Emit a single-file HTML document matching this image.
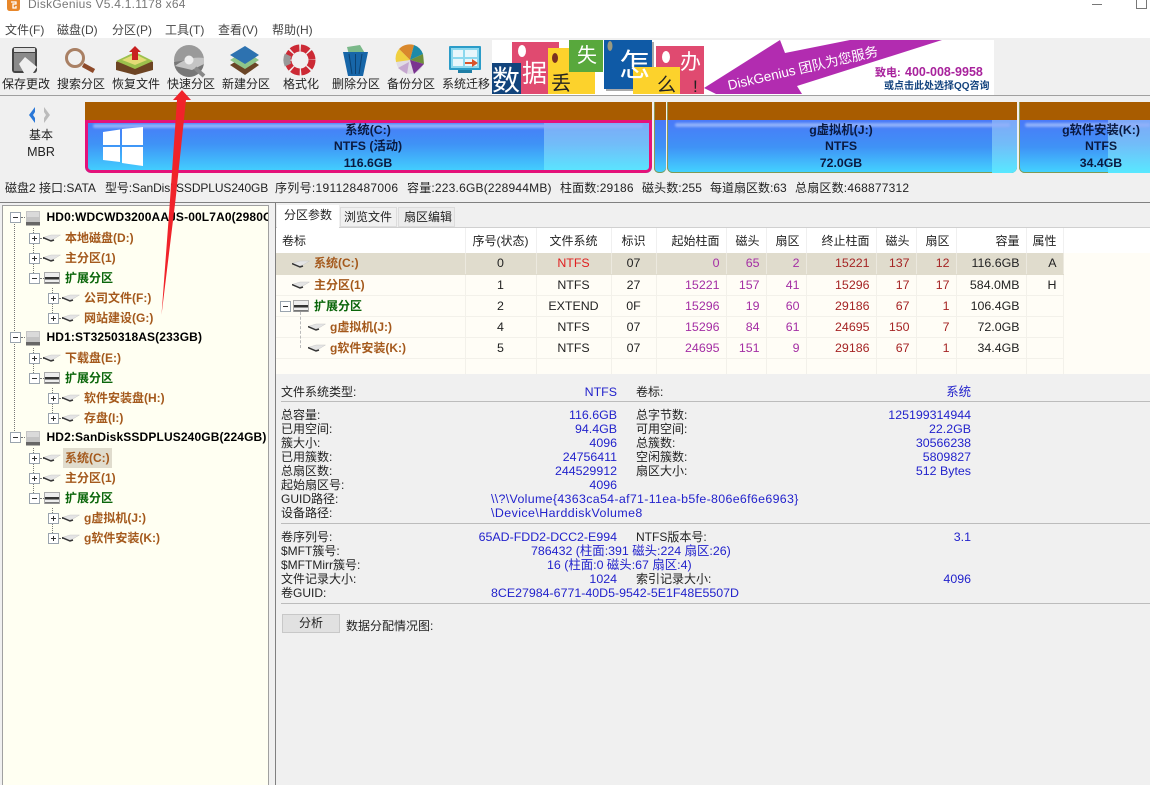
<!DOCTYPE html>
<html lang="zh"><head><meta charset="utf-8"><title>DiskGenius</title>
<style>
html,body{margin:0;padding:0;width:1150px;height:785px;overflow:hidden}
body{position:relative;background:#f0f0f0;font:12px/14px "Liberation Sans","Noto Sans CJK SC",sans-serif;color:#222}
#w{position:absolute;left:0;top:0;width:1150px;height:785px;overflow:hidden;background:#f0f0f0}
.t{position:absolute;white-space:nowrap;line-height:14px}
.a{position:absolute}
.m{color:#444}
.c{transform:translateX(-50%)}
.lb{font-size:12px;color:#222}
.v{color:#2222cc;font-size:12.4px}
.h{font-weight:bold;color:#000;letter-spacing:.13px}
.br{font-weight:bold;color:#a4591c}
.gr{font-weight:bold;color:#0b660b}
.pb{font-weight:bold;color:#0a1a40;font-size:12.3px}
.b{position:absolute;width:9px;height:9px;border:1px solid #9aa4ae;background:#fff;box-sizing:content-box}
.b:before{content:"";position:absolute;left:2px;top:4px;width:5px;height:1px;background:#333}
.p:after{content:"";position:absolute;left:4px;top:2px;width:1px;height:5px;background:#333}
.dv{position:absolute;border-left:1px dotted #777;width:0}
.dh{position:absolute;border-top:1px dotted #777;height:0}
svg.ic{position:absolute;overflow:visible}
table{position:absolute;left:276px;top:228px;border-collapse:collapse;table-layout:fixed;width:787px;font-size:12.4px}
td{height:21px;padding:0 6px;border-right:1px solid #f3f1ea;border-bottom:1px solid #f3f1ea;white-space:nowrap;box-sizing:border-box;background:#fffdf6;text-align:right;overflow:hidden}
tr.hd td{height:25px;background:#fff;color:#222;font-size:12px;border-right:1px solid #f0f0f0;border-bottom:0}
tr.sel td{background:#e0dccd;border-right-color:#ece9df;border-bottom-color:#e0dccd}
tr.bl td{height:16px;border-bottom:0}
td.l{text-align:left}td.ce{text-align:center;padding:0}
.pu{color:#a42ea4}.re{color:#a52424}
hr{position:absolute;margin:0;border:0;height:1px;background:#bcbcbc;left:281px;width:869px}
.pt{position:absolute;overflow:hidden;background:linear-gradient(#a85c00 18px,#4a79f8 18px,#3f92f6 45px,#43d4ff);box-shadow:inset 0 -1px 0 #7f9a55,inset 1px 0 0 #8f9a55}
.li{position:absolute;top:18px;height:53px;background:linear-gradient(#7ea8f8,#72bcf8 45%,#58e8ff)}
.gl{position:absolute;top:21px;height:4px;background:#8fb0fa;border-radius:3px;filter:blur(1px)}
</style></head><body><div id="w">
<svg width="0" height="0" style="position:absolute"><defs>
<symbol id="pt" viewBox="0 0 18 10"><path d="M0 4.500L8 2H17.500L10 6.500L7 7Z" fill="#e4e4e4" stroke="#c8c8c8" stroke-width=".5"/><path d="M0 4.500L8 8L11 7" fill="none" stroke="#333" stroke-width="1.500"/></symbol>
<symbol id="hd" viewBox="0 0 14 15"><rect x="0" y="0" width="14" height="11" fill="#c4c4c4"/><rect x="1" y="1" width="12" height="5" fill="#dadada"/><rect x="0" y="11" width="14" height="3.500" fill="#666"/></symbol>
<symbol id="ex" viewBox="0 0 16 12"><rect x=".5" y=".5" width="15" height="11" fill="#eee" stroke="#aaa"/><rect x="1" y="5" width="14" height="2.500" fill="#333"/><rect x="1" y="10" width="14" height="1.500" fill="#777"/></symbol>
</defs></svg>

<!-- title bar -->
<div class="a" style="left:0;top:0;width:1150px;height:38px;background:#fff"></div>
<svg class="ic" style="left:7px;top:0" width="14" height="12"><path d="M0 0H13V8Q13 11 10 11H3Q0 11 0 8Z" fill="#e8872a"/><path d="M4 2H9V4H6V8H9V6" fill="none" stroke="#fff" stroke-width="1.300"/></svg>
<span class="t" style="left:28px;top:-3px;color:#777;letter-spacing:.25px">DiskGenius V5.4.1.1178 x64</span>
<div class="a" style="left:1092px;top:4px;width:10px;height:1px;background:#777"></div>
<div class="a" style="left:1136px;top:-2px;width:9px;height:9px;border:1px solid #777"></div>
<span class="t m" style="left:5px;top:23px">文件(F)</span><span class="t m" style="left:57px;top:23px">磁盘(D)</span><span class="t m" style="left:112px;top:23px">分区(P)</span><span class="t m" style="left:165px;top:23px">工具(T)</span><span class="t m" style="left:218px;top:23px">查看(V)</span><span class="t m" style="left:272px;top:23px">帮助(H)</span>

<!-- toolbar icons -->
<svg class="ic" style="left:0;top:40px" width="492" height="40" viewBox="0 40 492 40">
<rect x="12" y="47" width="25" height="26" rx="3" fill="#444"/><rect x="14" y="53" width="21" height="18" fill="#8a8a8a"/><rect x="14" y="48" width="21" height="4" fill="#ddd"/><path d="M19 64L25 57L37 67L33 73H24Z" fill="#f0f0f0"/>
<circle cx="75" cy="58" r="8.500" fill="none" stroke="#a98064" stroke-width="3"/><path d="M83 65L94 71" stroke="#8e4a2a" stroke-width="4.500"/>
<path d="M116 62L135 53L153 62V70L135 75L116 70Z" fill="#6d4423"/><path d="M116 61L135 52L153 61L135 69Z" fill="#9cc04c"/><path d="M122 60L135 54L147 60L135 65Z" fill="#e4db76"/><path d="M135 46L141 52H138V60H132V52H129Z" fill="#c82020"/>
<circle cx="189" cy="60" r="15" fill="#9a9a9a"/><path d="M174 62A15 15 0 0 0 204 62L188 60Z" fill="#777"/><path d="M175 66Q188 56 204 58L204 64L192 70Z" fill="#c5c5c5"/><circle cx="189" cy="60" r="4.500" fill="#eee"/><path d="M195 68L204 76" stroke="#888" stroke-width="4"/>
<path d="M230 65L245 56L259 65L245 75Z" fill="#6a4526"/><path d="M230 60L245 51L259 60L245 69Z" fill="#8fc58a"/><path d="M230 55L245 46L259 55L245 64Z" fill="#2d72b0"/>
<circle cx="300" cy="60" r="12" fill="none" stroke="#cc2a35" stroke-width="7" stroke-dasharray="8 1.500"/><path d="M288 55A12 12 0 0 0 288 65" fill="none" stroke="#999" stroke-width="7"/>
<path d="M347 47L360 45L366 55H349Z" fill="#7ab889"/><path d="M343 52H368L363 76H348Z" fill="#1766a8"/><path d="M349 54L352 74M355.500 54V74M362 54L359 74" stroke="#0c4272" stroke-width="1"/>
<circle cx="410" cy="60" r="14" fill="#e0dbe4"/><path d="M410 60L399 49A15 15 0 0 1 414 45Z" fill="#d9882c"/><path d="M410 60L414 45A15 15 0 0 1 423 54Z" fill="#1c8aa8"/><path d="M410 60L423 54L424 64Z" fill="#6e8f3a"/><path d="M410 60L424 64L414 74Z" fill="#7b3490"/><path d="M410 60L396 62A15 15 0 0 1 399 49Z" fill="#f0d040"/><path d="M409 62L398 68L407 74Z" fill="#c5a7cf"/>
<rect x="449" y="46" width="32" height="24" rx="1" fill="#2b9cc8"/><rect x="451" y="48" width="28" height="20" fill="#8cd8ee"/><path d="M453 50H463V57H453ZM465 50H477V57H465ZM453 59H463V66H453ZM465 59H477V66H465Z" fill="#e8f6fb"/><path d="M465 62H472V59L478 63L472 67V64H465Z" fill="#d9532a"/><rect x="458" y="70" width="14" height="3" fill="#1f7ea5"/>
</svg>
<span class="t" style="left:2px;top:77px">保存更改</span><span class="t" style="left:57px;top:77px">搜索分区</span><span class="t" style="left:112px;top:77px">恢复文件</span><span class="t" style="left:167px;top:77px">快速分区</span><span class="t" style="left:222px;top:77px">新建分区</span><span class="t" style="left:283px;top:77px">格式化</span><span class="t" style="left:332px;top:77px">删除分区</span><span class="t" style="left:387px;top:77px">备份分区</span><span class="t" style="left:442px;top:77px">系统迁移</span>

<!-- banner -->
<svg class="ic" style="left:492px;top:40px;overflow:hidden" width="502" height="55" viewBox="492 40 502 55" font-family="Liberation Sans,Noto Sans CJK SC,sans-serif">
<rect x="492" y="40" width="502" height="55" fill="#fff"/>
<rect x="512" y="42" width="47" height="52" fill="#e04a70"/><rect x="492" y="63" width="29" height="31" fill="#12447c"/>
<rect x="548" y="48" width="47" height="46" fill="#fcd22c"/><rect x="569" y="40" width="34" height="32" fill="#58a83c"/><rect x="606" y="42" width="48" height="49" fill="#aaa"/><rect x="604" y="40" width="48" height="49" fill="#0f5aa6"/><rect x="633" y="67" width="47" height="27" fill="#fcd22c"/><rect x="656" y="46" width="48" height="21" fill="#e04a70"/><rect x="680" y="67" width="24" height="27" fill="#e04a70"/>
<ellipse cx="522" cy="51" rx="4" ry="6" fill="#fff"/><ellipse cx="555" cy="58" rx="3" ry="5" fill="#7a3020"/><ellipse cx="610" cy="46" rx="2.500" ry="5" fill="#9a9a80"/><ellipse cx="666" cy="57" rx="4" ry="6" fill="#fff"/>
<text x="492" y="90" font-size="28" fill="#fff">数</text><text x="522" y="82" font-size="25" fill="#fff">据</text><text x="551" y="90" font-size="20" fill="#222">丢</text><text x="577" y="62" font-size="20" fill="#fff">失</text><text x="619" y="76" font-size="31" fill="#fff">怎</text><text x="657" y="91" font-size="19" fill="#222">么</text><text x="680" y="69" font-size="21" fill="#fff">办</text><text x="693" y="92" font-size="17" fill="#222">!</text>
<path d="M704 88L780 40L785 53L850 40H942L797 86L802 94H716Z" fill="#b22cb0"/>
<text x="729" y="90" font-size="13.500" fill="#fff" transform="rotate(-13 729 90)">DiskGenius 团队为您服务</text>
<text x="875" y="76" font-size="11" font-weight="bold" fill="#a8229c">致电:</text><text x="905" y="76" font-size="12.500" font-weight="bold" fill="#a8229c">400-008-9958</text>
<text x="884" y="89" font-size="10" font-weight="bold" fill="#13437e">或点击此处选择QQ咨询</text>
</svg>

<div class="a" style="left:0;top:95px;width:1150px;height:1px;background:#a0a0a0"></div>

<!-- disk nav -->
<svg class="ic" style="left:27px;top:106px" width="26" height="18"><path d="M8 1L2 9L8 17V12L6 9L8 6Z" fill="#2a78d8"/><path d="M17 1L23 9L17 17V12L19 9L17 6Z" fill="#bbb"/></svg>
<span class="t c" style="left:41px;top:128px">基本</span><span class="t c" style="left:41px;top:145px;font-size:12.500px">MBR</span>

<!-- partitions -->
<div class="a" style="left:85px;top:102px;width:567px;height:71px;border-radius:0 0 6px 6px;overflow:hidden"><div class="a" style="left:0;top:0;width:100%;height:18px;background:#a85c00"></div><div class="a" style="left:0;top:18px;width:100%;height:53px;background:linear-gradient(#4a79f8,#3f92f6 45%,#43d4ff)"></div><div class="a" style="left:459px;top:18px;width:108px;height:53px;background:linear-gradient(#7ea8f8,#72bcf8 45%,#58e8ff)"></div><div class="gl" style="left:8px;width:550px;top:22px"></div><div class="a" style="left:0;top:18px;width:567px;height:53px;box-sizing:border-box;border:3px solid #e4127a;border-radius:0 0 6px 6px"></div></div>
<svg class="ic" style="left:103px;top:127px" width="41" height="39"><path d="M0 5L17 2.500V18H0ZM19 2L40 0V18H19ZM0 20H17V35L0 33ZM19 20H40V39L19 36Z" fill="#fff"/></svg>
<div class="pt" style="left:654px;top:102px;width:12px;height:71px;border-radius:0 0 5px 5px"></div>
<div class="pt" style="left:667px;top:102px;width:350px;height:71px;border-radius:0 0 6px 6px"><div class="li" style="left:325px;width:25px"></div><div class="gl" style="left:8px;width:335px"></div></div>
<div class="pt" style="left:1019px;top:102px;width:131px;height:71px;border-radius:0 0 0 6px"><div class="li" style="left:89px;width:42px"></div><div class="gl" style="left:6px;width:125px"></div></div>
<span class="t c pb" style="left:368px;top:123px">系统(C:)</span><span class="t c pb" style="left:368px;top:139px">NTFS (活动)</span><span class="t c pb" style="left:368px;top:156px">116.6GB</span>
<span class="t c pb" style="left:841px;top:123px">g虚拟机(J:)</span><span class="t c pb" style="left:841px;top:139px">NTFS</span><span class="t c pb" style="left:841px;top:156px">72.0GB</span>
<span class="t c pb" style="left:1101px;top:123px">g软件安装(K:)</span><span class="t c pb" style="left:1101px;top:139px">NTFS</span><span class="t c pb" style="left:1101px;top:156px">34.4GB</span>

<!-- status -->
<span class="t" style="left:5px;top:181px">磁盘2 接口:SATA</span><span class="t" style="left:105px;top:181px;letter-spacing:-.1px">型号:SanDiskSSDPLUS240GB</span><span class="t" style="left:275px;top:181px;letter-spacing:.3px">序列号:191128487006</span><span class="t" style="left:407px;top:181px;letter-spacing:.2px">容量:223.6GB(228944MB)</span><span class="t" style="left:560px;top:181px;letter-spacing:.1px">柱面数:29186</span><span class="t" style="left:642px;top:181px;letter-spacing:.1px">磁头数:255</span><span class="t" style="left:710px;top:181px">每道扇区数:63</span><span class="t" style="left:795px;top:181px;letter-spacing:.2px">总扇区数:468877312</span>
<div class="a" style="left:0;top:202px;width:1150px;height:1px;background:#808080"></div>

<!-- left tree -->
<div class="a" style="left:2px;top:205px;width:265px;height:590px;background:#fffff2;border:1px solid #a0a0a0"></div>
<div class="dv" style="left:14px;top:222px;height:215px"></div>
<div class="dv" style="left:33px;top:228px;height:49px"></div><div class="dv" style="left:52px;top:288px;height:29px"></div>
<div class="dv" style="left:33px;top:348px;height:29px"></div><div class="dv" style="left:52px;top:388px;height:29px"></div>
<div class="dv" style="left:33px;top:448px;height:49px"></div><div class="dv" style="left:52px;top:508px;height:29px"></div>

<i class="b" style="left:10px;top:212px"></i><div class="dh" style="left:21px;top:217px;width:6px"></div><svg class="ic" style="left:26px;top:211px" width="14" height="15"><use href="#hd"/></svg>
<span class="t h" style="left:46.500px;top:210px;width:221px;overflow:hidden">HD0:WDCWD3200AAJS-00L7A0(2980GB)</span>
<i class="b p" style="left:29px;top:233px"></i><div class="dh" style="left:40px;top:238px;width:4px"></div><svg class="ic" style="left:43px;top:233px" width="18" height="10"><use href="#pt"/></svg><span class="t br" style="left:65px;top:231px">本地磁盘(D:)</span>
<i class="b p" style="left:29px;top:253px"></i><div class="dh" style="left:40px;top:258px;width:4px"></div><svg class="ic" style="left:43px;top:253px" width="18" height="10"><use href="#pt"/></svg><span class="t br" style="left:65px;top:251px">主分区(1)</span>
<i class="b" style="left:29px;top:273px"></i><div class="dh" style="left:40px;top:278px;width:4px"></div><svg class="ic" style="left:44px;top:272px" width="16" height="12"><use href="#ex"/></svg><span class="t gr" style="left:65px;top:271px">扩展分区</span>
<i class="b p" style="left:48px;top:293px"></i><div class="dh" style="left:59px;top:298px;width:4px"></div><svg class="ic" style="left:62px;top:293px" width="18" height="10"><use href="#pt"/></svg><span class="t br" style="left:84px;top:291px">公司文件(F:)</span>
<i class="b p" style="left:48px;top:313px"></i><div class="dh" style="left:59px;top:318px;width:4px"></div><svg class="ic" style="left:62px;top:313px" width="18" height="10"><use href="#pt"/></svg><span class="t br" style="left:84px;top:311px">网站建设(G:)</span>

<i class="b" style="left:10px;top:332px"></i><div class="dh" style="left:21px;top:337px;width:6px"></div><svg class="ic" style="left:26px;top:331px" width="14" height="15"><use href="#hd"/></svg>
<span class="t h" style="left:46.500px;top:330px">HD1:ST3250318AS(233GB)</span>
<i class="b p" style="left:29px;top:353px"></i><div class="dh" style="left:40px;top:358px;width:4px"></div><svg class="ic" style="left:43px;top:353px" width="18" height="10"><use href="#pt"/></svg><span class="t br" style="left:65px;top:351px">下载盘(E:)</span>
<i class="b" style="left:29px;top:373px"></i><div class="dh" style="left:40px;top:378px;width:4px"></div><svg class="ic" style="left:44px;top:372px" width="16" height="12"><use href="#ex"/></svg><span class="t gr" style="left:65px;top:371px">扩展分区</span>
<i class="b p" style="left:48px;top:393px"></i><div class="dh" style="left:59px;top:398px;width:4px"></div><svg class="ic" style="left:62px;top:393px" width="18" height="10"><use href="#pt"/></svg><span class="t br" style="left:84px;top:391px">软件安装盘(H:)</span>
<i class="b p" style="left:48px;top:413px"></i><div class="dh" style="left:59px;top:418px;width:4px"></div><svg class="ic" style="left:62px;top:413px" width="18" height="10"><use href="#pt"/></svg><span class="t br" style="left:84px;top:411px">存盘(I:)</span>

<i class="b" style="left:10px;top:432px"></i><div class="dh" style="left:21px;top:437px;width:6px"></div><svg class="ic" style="left:26px;top:431px" width="14" height="15"><use href="#hd"/></svg>
<span class="t h" style="left:46.500px;top:430px">HD2:SanDiskSSDPLUS240GB(224GB)</span>
<div class="a" style="left:63px;top:448px;width:49px;height:20px;background:#e0dccd"></div>
<i class="b p" style="left:29px;top:453px"></i><div class="dh" style="left:40px;top:458px;width:4px"></div><svg class="ic" style="left:43px;top:453px" width="18" height="10"><use href="#pt"/></svg><span class="t br" style="left:65px;top:451px">系统(C:)</span>
<i class="b p" style="left:29px;top:473px"></i><div class="dh" style="left:40px;top:478px;width:4px"></div><svg class="ic" style="left:43px;top:473px" width="18" height="10"><use href="#pt"/></svg><span class="t br" style="left:65px;top:471px">主分区(1)</span>
<i class="b" style="left:29px;top:493px"></i><div class="dh" style="left:40px;top:498px;width:4px"></div><svg class="ic" style="left:44px;top:492px" width="16" height="12"><use href="#ex"/></svg><span class="t gr" style="left:65px;top:491px">扩展分区</span>
<i class="b p" style="left:48px;top:513px"></i><div class="dh" style="left:59px;top:518px;width:4px"></div><svg class="ic" style="left:62px;top:513px" width="18" height="10"><use href="#pt"/></svg><span class="t br" style="left:84px;top:511px">g虚拟机(J:)</span>
<i class="b p" style="left:48px;top:533px"></i><div class="dh" style="left:59px;top:538px;width:4px"></div><svg class="ic" style="left:62px;top:533px" width="18" height="10"><use href="#pt"/></svg><span class="t br" style="left:84px;top:531px">g软件安装(K:)</span>

<!-- right panel -->
<div class="a" style="left:275px;top:203px;width:1px;height:582px;background:#808080"></div>
<div class="a" style="left:276px;top:227px;width:874px;height:1px;background:#d0d0d0"></div>
<div class="a" style="left:277px;top:205px;width:62px;height:23px;background:#fff"></div><span class="t" style="left:284px;top:208px">分区参数</span>
<div class="a" style="left:340px;top:207px;width:57px;height:20px;border:1px solid #dcdcdc;box-sizing:border-box;background:#f0f0f0"></div><span class="t" style="left:344px;top:210px">浏览文件</span>
<div class="a" style="left:398px;top:207px;width:57px;height:20px;border:1px solid #dcdcdc;box-sizing:border-box;background:#ececec"></div><span class="t" style="left:404px;top:210px">扇区编辑</span>
<div class="a" style="left:276px;top:228px;width:874px;height:146px;background:#fffdf6"></div><div class="a" style="left:276px;top:228px;width:874px;height:25px;background:#fff"></div>

<table>
<colgroup><col style="width:189px"><col style="width:71px"><col style="width:75px"><col style="width:45px"><col style="width:70px"><col style="width:40px"><col style="width:40px"><col style="width:70px"><col style="width:40px"><col style="width:40px"><col style="width:70px"><col style="width:37px"></colgroup>
<tr class="hd"><td class="l">卷标</td><td class="ce">序号(状态)</td><td class="ce">文件系统</td><td class="ce">标识</td><td>起始柱面</td><td>磁头</td><td>扇区</td><td>终止柱面</td><td>磁头</td><td>扇区</td><td>容量</td><td>属性</td></tr>
<tr class="sel"><td class="l br" style="padding-left:38px;font-size:12px">系统(C:)</td><td class="ce">0</td><td class="ce" style="color:#e02020">NTFS</td><td class="ce">07</td><td class="pu">0</td><td class="pu">65</td><td class="pu">2</td><td class="re">15221</td><td class="re">137</td><td class="re">12</td><td>116.6GB</td><td>A</td></tr>
<tr><td class="l br" style="padding-left:38px;font-size:12px">主分区(1)</td><td class="ce">1</td><td class="ce">NTFS</td><td class="ce">27</td><td class="pu">15221</td><td class="pu">157</td><td class="pu">41</td><td class="re">15296</td><td class="re">17</td><td class="re">17</td><td>584.0MB</td><td>H</td></tr>
<tr><td class="l gr" style="padding-left:38px;font-size:12px">扩展分区</td><td class="ce">2</td><td class="ce">EXTEND</td><td class="ce">0F</td><td class="pu">15296</td><td class="pu">19</td><td class="pu">60</td><td class="re">29186</td><td class="re">67</td><td class="re">1</td><td>106.4GB</td><td></td></tr>
<tr><td class="l br" style="padding-left:54px;font-size:12px">g虚拟机(J:)</td><td class="ce">4</td><td class="ce">NTFS</td><td class="ce">07</td><td class="pu">15296</td><td class="pu">84</td><td class="pu">61</td><td class="re">24695</td><td class="re">150</td><td class="re">7</td><td>72.0GB</td><td></td></tr>
<tr><td class="l br" style="padding-left:54px;font-size:12px">g软件安装(K:)</td><td class="ce">5</td><td class="ce">NTFS</td><td class="ce">07</td><td class="pu">24695</td><td class="pu">151</td><td class="pu">9</td><td class="re">29186</td><td class="re">67</td><td class="re">1</td><td>34.4GB</td><td></td></tr>
<tr class="bl"><td></td><td></td><td></td><td></td><td></td><td></td><td></td><td></td><td></td><td></td><td></td><td></td></tr>
</table>
<svg class="ic" style="left:292px;top:259px" width="18" height="10"><use href="#pt"/></svg>
<svg class="ic" style="left:292px;top:280px" width="18" height="10"><use href="#pt"/></svg>
<i class="b" style="left:280px;top:301px"></i><svg class="ic" style="left:293px;top:300px" width="16" height="12"><use href="#ex"/></svg>
<div class="dv" style="left:300px;top:312px;height:36px;border-left-style:dashed;border-color:#bbb"></div>
<svg class="ic" style="left:308px;top:322px" width="18" height="10"><use href="#pt"/></svg>
<svg class="ic" style="left:308px;top:343px" width="18" height="10"><use href="#pt"/></svg>

<!-- details -->
<span class="t lb" style="left:281px;top:385px">文件系统类型:</span><span class="t v" style="right:533px;top:385px">NTFS</span><span class="t lb" style="left:636px;top:385px">卷标:</span><span class="t v" style="right:179px;top:385px">系统</span>
<hr style="top:401px">
<span class="t lb" style="left:281px;top:408px">总容量:</span><span class="t v" style="right:533px;top:408px">116.6GB</span><span class="t lb" style="left:636px;top:408px">总字节数:</span><span class="t v" style="right:179px;top:408px">125199314944</span>
<span class="t lb" style="left:281px;top:422px">已用空间:</span><span class="t v" style="right:533px;top:422px">94.4GB</span><span class="t lb" style="left:636px;top:422px">可用空间:</span><span class="t v" style="right:179px;top:422px">22.2GB</span>
<span class="t lb" style="left:281px;top:436px">簇大小:</span><span class="t v" style="right:533px;top:436px">4096</span><span class="t lb" style="left:636px;top:436px">总簇数:</span><span class="t v" style="right:179px;top:436px">30566238</span>
<span class="t lb" style="left:281px;top:450px">已用簇数:</span><span class="t v" style="right:533px;top:450px">24756411</span><span class="t lb" style="left:636px;top:450px">空闲簇数:</span><span class="t v" style="right:179px;top:450px">5809827</span>
<span class="t lb" style="left:281px;top:464px">总扇区数:</span><span class="t v" style="right:533px;top:464px">244529912</span><span class="t lb" style="left:636px;top:464px">扇区大小:</span><span class="t v" style="right:179px;top:464px">512 Bytes</span>
<span class="t lb" style="left:281px;top:478px">起始扇区号:</span><span class="t v" style="right:533px;top:478px">4096</span>
<span class="t lb" style="left:281px;top:492px">GUID路径:</span><span class="t v" style="left:491px;top:492px;letter-spacing:.33px">\\?\Volume{4363ca54-af71-11ea-b5fe-806e6f6e6963}</span>
<span class="t lb" style="left:281px;top:506px">设备路径:</span><span class="t v" style="left:491px;top:506px;letter-spacing:.43px">\Device\HarddiskVolume8</span>
<hr style="top:523px">
<span class="t lb" style="left:281px;top:530px">卷序列号:</span><span class="t v" style="right:533px;top:530px">65AD-FDD2-DCC2-E994</span><span class="t lb" style="left:636px;top:530px">NTFS版本号:</span><span class="t v" style="right:179px;top:530px">3.1</span>
<span class="t lb" style="left:281px;top:544px">$MFT簇号:</span><span class="t v" style="left:531px;top:544px">786432 (柱面:391 磁头:224 扇区:26)</span>
<span class="t lb" style="left:281px;top:558px">$MFTMirr簇号:</span><span class="t v" style="left:547px;top:558px">16 (柱面:0 磁头:67 扇区:4)</span>
<span class="t lb" style="left:281px;top:572px">文件记录大小:</span><span class="t v" style="right:533px;top:572px">1024</span><span class="t lb" style="left:636px;top:572px">索引记录大小:</span><span class="t v" style="right:179px;top:572px">4096</span>
<span class="t lb" style="left:281px;top:586px">卷GUID:</span><span class="t v" style="left:491px;top:586px">8CE27984-6771-40D5-9542-5E1F48E5507D</span>
<hr style="top:603px">
<div class="a" style="left:282px;top:614px;width:58px;height:19px;background:#e1e1e1;border:1px solid #c8c8c8;box-sizing:border-box"></div><span class="t c" style="left:311px;top:616px">分析</span>
<span class="t lb" style="left:346px;top:619px">数据分配情况图:</span>

<!-- red arrow -->
<svg class="ic" style="left:0;top:0" width="1150" height="785"><path d="M182 90L191 100H186L175.500 200L161.500 315L170 200L177 100H173Z" fill="#f0232a"/></svg>
</div></body></html>
